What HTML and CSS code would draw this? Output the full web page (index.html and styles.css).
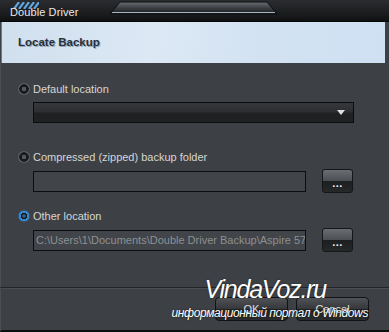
FILE: index.html
```html
<!DOCTYPE html>
<html>
<head>
<meta charset="utf-8">
<link rel="stylesheet" href="styles.css">
</head>
<body>
<div class="window">
  <div class="titlebar">
    <svg class="logo" width="26" height="7" viewBox="0 0 26 7">
      <g stroke="#5ea6e0" stroke-width="2.2">
        <line x1="1" y1="7" x2="6" y2="0"/>
        <line x1="6" y1="7" x2="11" y2="0"/>
        <line x1="11" y1="7" x2="16" y2="0"/>
        <line x1="16" y1="7" x2="21" y2="0"/>
        <line x1="21" y1="7" x2="26" y2="0"/>
      </g>
    </svg>
    <span class="title">Double Driver</span>
    <svg class="deco" width="170" height="15" viewBox="0 0 170 15">
      <defs>
        <linearGradient id="dg" x1="0" y1="0" x2="0" y2="1">
          <stop offset="0" stop-color="#6a6e74"/>
          <stop offset="0.5" stop-color="#3b3e42"/>
          <stop offset="1" stop-color="#1a1b1d"/>
        </linearGradient>
      </defs>
      <polygon points="10,1 157,1 167,13 0,13" fill="url(#dg)" stroke="#0e0f10" stroke-width="1"/>
      <line x1="2" y1="11.5" x2="165" y2="11.5" stroke="#9fb6c8" stroke-width="1.2"/>
    </svg>
  </div>
  <div class="header">
    <span class="header-title">Locate Backup</span>
  </div>
  <div class="content">
    <div class="option">
      <span class="radio"></span>
      <span class="label">Default location</span>
    </div>
    <div class="select">
      <span class="arrow"></span>
    </div>
    <div class="option option-gap">
      <span class="radio"></span>
      <span class="label">Compressed (zipped) backup folder</span>
    </div>
    <div class="field-row">
      <div class="field"></div>
      <div class="browse"><span>...</span></div>
    </div>
    <div class="option option-gap-small">
      <span class="radio checked"></span>
      <span class="label">Other location</span>
    </div>
    <div class="field-row">
      <div class="field"><span class="path">C:\Users\1\Documents\Double Driver Backup\Aspire 5742G</span></div>
      <div class="browse"><span>...</span></div>
    </div>
  </div>
  <div class="footer">
    <div class="btn">OK</div>
    <div class="btn">Cancel</div>
    <div class="watermark">
      <span class="wm-big">VindaVoz.ru</span>
      <span class="wm-small">информационный портал о Windows</span>
    </div>
  </div>
</div>
</body>
</html>
```

FILE: styles.css
```css
html, body {
  margin: 0;
  padding: 0;
  background: #111213;
}
.window {
  width: 389px;
  height: 332px;
  display: flex;
  flex-direction: column;
  background: #3d4044;
  font-family: "Liberation Sans", Arial, sans-serif;
  overflow: hidden;
  position: relative;
}
.titlebar {
  position: relative;
  height: 22px;
  flex: none;
  background: linear-gradient(#2b2c2f, #1a1b1d 70%, #0f1011);
  border-bottom: 1px solid #060707;
  box-sizing: border-box;
}
.logo {
  position: absolute;
  left: 13px;
  top: 2px;
}
.title {
  position: absolute;
  left: 10px;
  top: 6px;
  font-size: 11px;
  color: #e8e8e8;
  letter-spacing: 0.1px;
}
.deco {
  position: absolute;
  left: 110px;
  top: 1px;
}
.header {
  height: 41px;
  flex: none;
  margin: 0 4px 0 1px;
  background: linear-gradient(100deg, #d0dfee 0%, #dce8f4 40%, #d2e2f2 70%, #cfe0f3 100%);
  display: flex;
  align-items: center;
  padding-left: 16px;
  border-left: 1px solid #6b7a88;
}
.header-title {
  font-weight: bold;
  font-size: 11.5px;
  color: #28313d;
  text-shadow: 1px 1px 0 #9aa7b4;
  margin-top: -2px;
}
.content {
  flex: none;
  height: 224px;
  box-sizing: border-box;
  padding: 19px 0 0 17px;
  border-left: 1px solid #4b4e52;
  display: flex;
  flex-direction: column;
}
.option {
  display: flex;
  align-items: center;
  height: 13px;
}
.option-gap {
  margin-top: 27px;
}
.option-gap-small {
  margin-top: 16px;
}
.radio {
  width: 12px;
  height: 12px;
  box-sizing: border-box;
  border-radius: 50%;
  background: radial-gradient(circle, #55585c 0 2px, #1a1b1c 2.5px 4.5px, #5b5e62 5px);
  margin-right: 3px;
}
.radio.checked {
  background: radial-gradient(circle, #2a5e93 0 1.5px, #15181c 2px 3px, #3c84c8 3.5px 5px, #2a5b8a 5.5px);
}
.label {
  font-size: 11px;
  color: #d6d6d6;
}
.select {
  margin: 7px 0 0 15px;
  width: 321px;
  height: 21px;
  box-sizing: border-box;
  border: 1px solid #0b0c0d;
  background: linear-gradient(#36383b, #2c2e31 45%, #1f2022 55%, #202123);
  position: relative;
}
.arrow {
  position: absolute;
  right: 8px;
  top: 7px;
  width: 0;
  height: 0;
  border-left: 4px solid transparent;
  border-right: 4px solid transparent;
  border-top: 5px solid #e0e0e0;
}
.field-row {
  display: flex;
  align-items: center;
  margin: 6px 0 0 15px;
  gap: 16px;
}
.field {
  width: 273px;
  height: 21px;
  box-sizing: border-box;
  border: 1px solid #0d0e0f;
  background: #414448;
  overflow: hidden;
  white-space: nowrap;
  display: flex;
  align-items: center;
}
.path {
  font-size: 11px;
  color: #8e9093;
  padding-left: 2px;
}
.browse {
  width: 31px;
  height: 24px;
  box-sizing: border-box;
  border: 1px solid #151617;
  border-radius: 3px;
  background: linear-gradient(#6a6d71, #4c4f53 48%, #1d1e20 52%, #26282a);
  display: flex;
  align-items: center;
  justify-content: center;
}
.browse span {
  color: #f0f0f0;
  font-size: 11px;
  font-weight: bold;
  margin-top: 4px;
  letter-spacing: 0.5px;
}
.footer {
  flex: 1;
  position: relative;
  border-top: 1px solid #222427;
  box-shadow: inset 0 1px 0 #4a4d51;
  border-bottom: 2px solid #0d0e0f;
  border-left: 1px solid #4b4e52;
  display: flex;
  justify-content: flex-end;
  align-items: flex-start;
  padding: 9px 20px 0 0;
  gap: 8px;
}
.btn {
  width: 73px;
  height: 24px;
  box-sizing: border-box;
  border: 1px solid #121314;
  border-radius: 4px;
  background: linear-gradient(#505357, #36383b 48%, #222325 52%, #2a2c2e);
  color: #e0e0e0;
  font-size: 11px;
  display: flex;
  align-items: center;
  justify-content: center;
}
.watermark {
  position: absolute;
  left: 160px;
  top: -13px;
  display: flex;
  flex-direction: column;
  align-items: flex-end;
  width: 207px;
  pointer-events: none;
  white-space: nowrap;
}
.wm-big {
  font-family: "Liberation Sans", Arial, sans-serif;
  font-style: italic;
  font-size: 25px;
  color: #ffffff;
  letter-spacing: -1.2px;
  margin-right: 42px;
  line-height: 28px;
  text-shadow: 0 0 2px rgba(0,0,0,0.4);
}
.wm-small {
  font-family: "Liberation Sans", Arial, sans-serif;
  font-style: italic;
  font-size: 12px;
  letter-spacing: -0.4px;
  color: #ffffff;
  line-height: 16px;
  margin-top: 2px;
  text-shadow: 0 0 2px rgba(0,0,0,0.6);
}
```
